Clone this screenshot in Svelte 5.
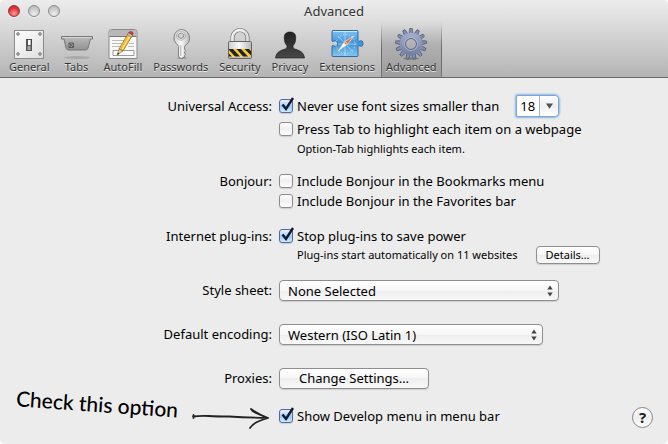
<script>
  const tabs = ['General', 'Tabs', 'AutoFill', 'Passwords', 'Security', 'Privacy', 'Extensions', 'Advanced'];
  let active = $state('Advanced');
  let fontSize = $state('18');
  const teeth = Array.from({ length: 13 }, (_, i) => (i * 360) / 13);
</script>

{#snippet icon(name)}
  <svg class="icon" viewBox="0 0 32 32" aria-hidden="true">
    {#if name === 'General'}
      <rect x="1.5" y="2.500" width="29" height="28" fill="url(#plate)" stroke="#8b8b8b" />
      <g fill="#aaa" stroke="#666" stroke-width=".6">
        <circle cx="5" cy="6" r="1.400" /><circle cx="27" cy="6" r="1.400" />
        <circle cx="5" cy="26" r="1.400" /><circle cx="27" cy="26" r="1.400" />
      </g>
      <rect x="13" y="11" width="6" height="12" fill="#555" />
      <rect x="14.500" y="11.500" width="3.500" height="6" fill="#fff" stroke="#333" stroke-width=".7" />
      <rect x="14.500" y="18" width="3" height="4" fill="#aaa" />
    {:else if name === 'Tabs'}
      <ellipse cx="16" cy="29.500" rx="13" ry="1.500" fill="#000" opacity=".13" />
      <path d="M.5 8.500h31v2.500h-2l-2.500 9q-.6 2-2.500 2h-17q-2 0-2.500-2L3 11H.5z" fill="url(#tab)" stroke="#777" />
      <path d="M1 9.500h30" stroke="#ddd" stroke-width=".8" />
      <path d="M8 15h4.500v4.500H8zM8 15l4.500 4.500M12.500 15L8 19.500" fill="none" stroke="#555" stroke-width=".9" />
    {:else if name === 'AutoFill'}
      <path d="M2 30.500V4q0-2.500 2.500-2.500h23Q30 1.500 30 4v26.500z" fill="#f8f8f8" stroke="#888" />
      <path d="M2.500 8V4q0-2 2-2h23q2 0 2 2v4z" fill="#b8b8b8" />
      <path d="M2.500 8.500h27" stroke="#777" />
      <path d="M5 12.500h14M5 15.500h10M5 18.500h9M22 15.500h5M21 18.500h6" stroke="#bbb" />
      <path d="M6 22.500h21v5H6z" fill="#fff" stroke="#999" />
      <path d="M12 21L21.500 5l4 2.300L16 23z" fill="#f9bd2e" stroke="#8c6417" stroke-width=".7" />
      <path d="M15 21.500l9-15.500" stroke="#ffe78c" stroke-width="1.200" />
      <path d="M12 21l-1.700 6L16 23z" fill="#e9cda0" stroke="#665032" stroke-width=".5" />
      <path d="M10.800 24.500L10.300 27l2-1.500z" fill="#222" />
      <path d="M20.300 7l1.400-2.400 4 2.300L24.300 9.300z" fill="#bbb" stroke="#666" stroke-width=".5" />
      <path d="M21.700 4.600q1.600-1.800 3.500-.7 1.700 1.100.5 3z" fill="#dc3d33" stroke="#9b201b" stroke-width=".6" />
    {:else if name === 'Passwords'}
      <ellipse cx="17" cy="30" rx="5" ry="1" fill="#000" opacity=".2" />
      <path fill-rule="evenodd" d="M16 1.500a8.500 8.500 0 0 1 4.500 15.700q-1 .8-1 2v1.800l1.300 1.500-1.300 1.500v1l1.200 1.300-1.200 1.200v1.500L16 30.500l-2.500-2V18.500q0-1-1.500-2A8.500 8.500 0 0 1 16 1.500zM16 5a2.700 2.700 0 1 0 .1 0z" fill="url(#metal)" stroke="#777" stroke-width=".9" />
      <path d="M16 17v11" stroke="#888" /><path d="M17 17v11" stroke="#fff" />
      <circle cx="16" cy="7.700" r="4.500" fill="none" stroke="#999" stroke-width=".7" />
    {:else if name === 'Security'}
      <path d="M8.500 14V9.500a7.500 7.500 0 0 1 15 0V14" fill="none" stroke="#777" stroke-width="4.200" />
      <path d="M8.500 14V9.500a7.500 7.500 0 0 1 15 0V14" fill="none" stroke="#ddd" stroke-width="2.800" />
      <path d="M8 14V9.500a7.500 7.500 0 0 1 12-6" fill="none" stroke="#fff" />
      <rect x="4.500" y="13.500" width="23" height="17" rx="1" fill="url(#metal)" stroke="#666" />
      <path d="M5 21h22v7.500H5z" fill="#fc3" />
      <path d="M5 21h4l7 7.500h-5L5 22zM12.500 21H17l7 7.500h-5zM20.500 21H25l2 2v4.500zM5 25.500l3 3H5z" fill="#242424" />
      <path d="M5 29.500h22" stroke="#bbb" />
    {:else if name === 'Privacy'}
      <path d="M16 4c4 0 6 2.200 5.700 6.200 0 3.500-1.300 6.200-2.700 7.600-.3 2 .5 2.700 2.500 3.500 5 1.700 8 2.700 9 8.700h-29c1-6 4-7 9-8.700 2-.8 2.800-1.500 2.500-3.500-1.400-1.400-2.700-4.100-2.700-7.600C10 6.200 12 4 16 4z" fill="url(#person)" stroke="#111" stroke-width=".6" />
    {:else if name === 'Extensions'}
      <path d="M2 2.500h24q1 0 1 1V13q.5 1 2 0 3-1 3 2.500T29 18q-1.500-1-2 0v9.500q0 1-1 1H2q-1 0-1-1V18q.5-1 2 0 3.500 1 3.500-2.500T3 13q-1.500 1-2 0V3.500q0-1 1-1z" fill="url(#blue)" stroke="#2d6ca9" />
      <path d="M2 3.500h24" stroke="#cbeaff" />
      <g stroke="#d8f0ff" stroke-width=".8" opacity=".7"><path d="M14 4v24M7 16h19M7 8l15 16M22 8L7 24" /></g>
      <circle cx="14.500" cy="16" r="9.500" fill="none" stroke="#c4e5fc" stroke-dasharray="1 2" />
      <path d="M23 8l-7 9-3-3z" fill="#ed6a32" stroke="#fff" stroke-width=".6" />
      <path d="M5 25l8-11 3 3z" fill="#fff" stroke="#789" stroke-width=".5" />
      <circle cx="14.500" cy="15.500" r="1.200" fill="#999" stroke="#fff" stroke-width=".5" />
    {:else}
      <ellipse cx="16" cy="30.500" rx="8" ry="1.200" fill="#000" opacity=".25" />
      <g fill="#8490b2" stroke="#535c78" stroke-width=".8">
        {#each teeth as angle}
          <path d="M14 6L14.800.5h2.400L18 6z" transform="rotate({angle} 16 16)" />
        {/each}
      </g>
      <path fill-rule="evenodd" d="M16 4.800a11.200 11.200 0 1 0 .1 0zM16 10.500a5.500 5.500 0 1 1-.1 0z" fill="url(#gear)" />
      <circle cx="16" cy="16" r="5.500" fill="none" stroke="#535c78" />
      <circle cx="16" cy="16" r="6.500" fill="none" stroke="#bfc8df" stroke-width=".7" />
    {/if}
  </svg>
{/snippet}

{#snippet check(label, checked)}
  <label class="check">
    <span class="tick">
      <input type="checkbox" {checked} />
      <svg viewBox="0 0 16 16" aria-hidden="true"><path d="M3.500 7.500l3.500 4.500L14 1" /></svg>
    </span>
    {label}
  </label>
{/snippet}

{#snippet arrows()}
  <svg class="arrows" viewBox="0 0 6 12" aria-hidden="true"><path d="M3 .5L5.700 4.500H.3zM3 11.500L.3 7.500h5.400z" /></svg>
{/snippet}

<svg class="defs" aria-hidden="true">
  <defs>
    <linearGradient id="plate" x2="1" y2="1"><stop stop-color="#fff" /><stop offset="1" stop-color="#ddd" /></linearGradient>
    <linearGradient id="tab" x2="0" y2="1"><stop stop-color="#bbb" /><stop offset="1" stop-color="#929292" /></linearGradient>
    <linearGradient id="metal"><stop stop-color="#ccc" /><stop offset=".45" stop-color="#fafafa" /><stop offset="1" stop-color="#b8b8b8" /></linearGradient>
    <linearGradient id="person" x2="0" y2="1"><stop stop-color="#222" /><stop offset="1" stop-color="#484848" /></linearGradient>
    <linearGradient id="blue" x2="0" y2="1"><stop stop-color="#7fc1f1" /><stop offset=".5" stop-color="#3e93d8" /><stop offset="1" stop-color="#85c8f1" /></linearGradient>
    <linearGradient id="gear" x2="0" y2="1"><stop stop-color="#a4afcc" /><stop offset="1" stop-color="#717da1" /></linearGradient>
  </defs>
</svg>

<main class="window">
  <header>
    <div class="titlebar">
      <div class="lights">
        <button class="light close" aria-label="Close"></button>
        <button class="light" aria-label="Minimize"></button>
        <button class="light" aria-label="Zoom"></button>
      </div>
      <h1>{active}</h1>
    </div>
    <nav>
      {#each tabs as name}
        <button class="tab" class:active={active === name} onclick={() => (active = name)}>
          {@render icon(name)}
          <span>{name}</span>
        </button>
      {/each}
    </nav>
  </header>

  <div class="form">
    <section class="access">
      <h2>Universal Access:</h2>
      <div>
        <div class="line">
          {@render check('Never use font sizes smaller than', true)}
          <div class="combo">
            <input aria-label="Minimum font size" bind:value={fontSize} />
            <button aria-label="Show font sizes"><svg viewBox="0 0 8 6" aria-hidden="true"><path d="M0 0h8L4 6z" /></svg></button>
          </div>
        </div>
        <div class="line tall">{@render check('Press Tab to highlight each item on a webpage', false)}</div>
        <p class="note">Option-Tab highlights each item.</p>
      </div>
    </section>

    <section class="bonjour">
      <h2>Bonjour:</h2>
      <div>
        <div class="line">{@render check('Include Bonjour in the Bookmarks menu', false)}</div>
        <div class="line">{@render check('Include Bonjour in the Favorites bar', false)}</div>
      </div>
    </section>

    <section class="plugins">
      <h2>Internet plug-ins:</h2>
      <div>
        <div class="line">{@render check('Stop plug-ins to save power', true)}</div>
        <div class="line detail">
          <p class="note">Plug-ins start automatically on 11 websites</p>
          <button class="push small">Details…</button>
        </div>
      </div>
    </section>

    <section class="sheet">
      <h2><label for="sheet">Style sheet:</label></h2>
      <div class="popup wide">
        <select id="sheet"><option>None Selected</option></select>
        {@render arrows()}
      </div>
    </section>

    <section class="encoding">
      <h2><label for="encoding">Default encoding:</label></h2>
      <div class="popup">
        <select id="encoding"><option>Western (ISO Latin 1)</option></select>
        {@render arrows()}
      </div>
    </section>

    <section class="proxies">
      <h2>Proxies:</h2>
      <div><button class="push">Change Settings…</button></div>
    </section>

    <section class="develop">
      <div class="callout">
        <span>Check this option</span>
        <svg viewBox="0 0 80 26" aria-hidden="true">
          <path d="M2.500 12v3M2 13.500q8-1 16-.5t20 .5q18 1 39 1.500M60 6q7 5 17 9M60 6q1 2 5 4t12 5M59 25q3-4 7-6t11-4" />
        </svg>
      </div>
      <div class="line">{@render check('Show Develop menu in menu bar', true)}</div>
    </section>
    <button class="help" aria-label="Help">?</button>
  </div>
</main>

<style>
  :global(body) { margin: 0; background: #fff; }
  .defs { position: absolute; width: 0; height: 0; }
  .window {
    min-height: 100vh;
    box-sizing: border-box;
    overflow: hidden;
    border-radius: 5px;
    background: #ececec;
    color: #000;
    font: 13px/20px "Lucida Grande", "Noto Sans", sans-serif;
  }
  button, input, select { font: inherit; color: inherit; margin: 0; padding: 0; box-sizing: border-box; }
  h1, h2, p { margin: 0; font-size: inherit; font-weight: 400; }

  header {
    height: 78px;
    box-sizing: border-box;
    border-bottom: 1px solid #686868;
    background: linear-gradient(#ececec, #dcdcdc 30%, #b4b4b4);
    color: #333;
    text-shadow: 0 1px 0 #eee;
  }
  .titlebar { display: grid; grid-template-columns: 1fr auto 1fr; height: 22px; line-height: 22px; }
  .lights { display: flex; gap: 8px; padding: 5px 0 0 8px; }
  .light {
    width: 12px; height: 12px;
    border: 1px solid #8a8a8a; border-radius: 50%;
    background: radial-gradient(circle at 50% 80%, #eee, #bcbcbc 80%);
    box-shadow: 0 1px 0 #eee;
  }
  .close { border-color: #9b3535; background: radial-gradient(circle at 50% 75%, #ff9a94, #dc343b 60%, #b92530); }
  nav { display: flex; gap: 1px; height: 55px; padding-left: 4px; font-size: 11px; line-height: 14px; }
  .tab {
    display: flex; flex-direction: column; align-items: center;
    padding: 6px 5px 0; border: 0; background: none; text-shadow: inherit;
  }
  .tab.active {
    border-style: solid; border-width: 0 1px; padding: 6px 4px 0;
    border-image: linear-gradient(#0000, #0006 50%, #0004) 1;
    background: linear-gradient(#0000, #0002 40%, #0002);
  }
  .icon { width: 32px; height: 32px; overflow: visible; flex: none; }

  .form { position: relative; padding: 17px 0 18px; }
  section { display: grid; grid-template-columns: 272fr 389fr; column-gap: 7px; }
  h2 { text-align: right; }
  .line { display: flex; align-items: center; height: 20px; }
  .access h2, .access .line { height: 22px; line-height: 22px; }
  .access .tall { height: 24px; }
  .bonjour { margin-top: 14px; }
  .plugins { margin-top: 15px; }
  .sheet { margin-top: 14px; }
  .encoding { margin-top: 23px; }
  .proxies { margin-top: 23px; }
  .develop { margin-top: 17px; }
  .note { padding-left: 18px; font-size: 11px; line-height: 16px; }
  .detail { gap: 18px; height: 18px; margin-bottom: 2px; }

  .check { display: flex; align-items: center; gap: 4px; white-space: nowrap; }
  .tick { position: relative; display: flex; }
  .tick input {
    appearance: none; width: 14px; height: 14px;
    border: 1px solid #8c8c8c; border-radius: 3px;
    background: linear-gradient(#fff, #f0f0f0 50%, #fff);
    box-shadow: 0 1px 1px #0002;
  }
  .tick input:checked { border-color: #5765a0; background: linear-gradient(#eaf4fd, #9fcaf2 55%, #c9efff); }
  .tick svg { position: absolute; left: 0; top: -2px; width: 16px; height: 16px; display: none; pointer-events: none; }
  .tick input:checked + svg { display: block; }
  .tick path { fill: none; stroke: #10192f; stroke-width: 2.400; }

  .combo {
    display: flex; width: 41px; height: 20px; margin-left: 18px;
    border-radius: 1px 4px 4px 1px; background: #fff;
    box-shadow: 0 0 0 1px #79a6db, 0 0 2px 2px #8fb5e2;
  }
  .combo input { width: 22px; padding: 0 0 0 3px; border: 0; outline: 0; background: none; }
  .combo button {
    flex: 1; display: grid; place-items: center;
    border: 0; border-left: 1px solid #a8b4c4; border-radius: 0 4px 4px 0;
    background: linear-gradient(#fff, #eee 50%, #fff);
  }
  .combo svg { width: 7px; height: 6px; fill: #505050; }

  .push, .popup select {
    border: 1px solid #8e8e8e; border-radius: 4px;
    background: linear-gradient(#fff, #f6f6f6 50%, #eeeeee 50%, #f8f8f8);
    box-shadow: 0 1px 1px #0002;
  }
  .push { display: block; height: 21px; padding: 0 19px; line-height: 19px; }
  .small { height: 18px; padding: 0 9px; font-size: 11px; line-height: 16px; }
  .popup { display: grid; align-items: center; width: 264px; }
  .wide { width: 280px; }
  .popup select, .arrows { grid-area: 1 / 1; }
  .popup select { appearance: none; width: 100%; height: 21px; padding-left: 8px; }
  .arrows { width: 6px; height: 12px; justify-self: end; margin-right: 6px; fill: #444; pointer-events: none; }

  .callout { position: relative; }
  .callout span {
    position: absolute; right: 94px; bottom: 10px; transform: rotate(4deg);
    font: 500 21px/24px "Lato", sans-serif; white-space: nowrap;
  }
  .callout svg {
    position: absolute; right: 1px; top: -3px; width: 80px; height: 26px;
    fill: none; stroke: #222; stroke-width: 1.800; stroke-linecap: round;
  }
  .help {
    position: absolute; right: 15px; bottom: 16px; width: 21px; height: 21px;
    border: 1px solid #858585; border-radius: 50%;
    background: linear-gradient(#fff, #eee 50%, #fff);
    color: #222; font-size: 15px; font-weight: 700; line-height: 19px;
  }
</style>
